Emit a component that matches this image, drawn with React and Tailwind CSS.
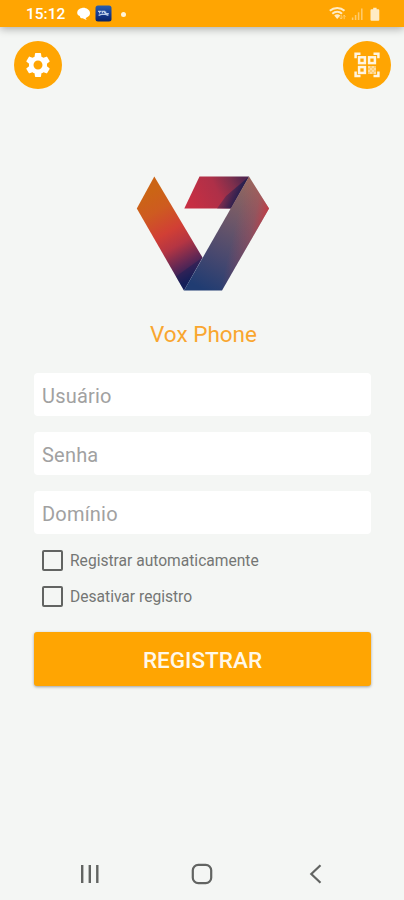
import { useState } from "react";
import { MdSettings } from "react-icons/md";

const FIELDS = [
  { name: "user", label: "Usuário", type: "text" },
  { name: "password", label: "Senha", type: "password" },
  { name: "domain", label: "Domínio", type: "text" },
];

const OPTIONS = [
  { name: "autoRegister", label: "Registrar automaticamente" },
  { name: "disableRegister", label: "Desativar registro" },
];

const StatusBar = () => (
  <header className="relative flex h-[27px] shrink-0 items-center bg-[#ffa502] pl-[26px] pr-[23px] text-white shadow-[0_2px_8px_rgba(0,0,0,0.3)]">
    <span className="w-[51px] pt-[3px] text-[15.5px] font-medium leading-none">
      15:12
    </span>
    <svg viewBox="0 0 14 14" className="mt-[1px] h-[14px] w-[14px]" fill="currentColor">
      <path d="M5 1C8 0.1 12.9 2.4 13 6C13.1 8.8 10.6 10.4 8.6 10.9L9.6 13L5.6 11.2C3.9 11.3 2.9 10.4 2.8 8.9C1 8.4 0.1 7.1 0.2 5.4C0.3 3 2.4 1.5 5 1Z" />
    </svg>
    <svg viewBox="0 0 17 17" className="ml-[4px] h-[17px] w-[17px]">
      <defs>
        <linearGradient id="appIcon" x1="0" y1="0" x2="0" y2="1">
          <stop offset="0" stopColor="#2a5fae" />
          <stop offset="0.5" stopColor="#163d94" />
          <stop offset="1" stopColor="#092264" />
        </linearGradient>
      </defs>
      <rect x="0.5" y="0.5" width="16" height="16" rx="2.5" fill="url(#appIcon)" />
      <path
        d="M3 6.4H6.4M4.6 6.4V8.6M7.4 8.2V6.4H9.5V8.2M10.6 6.4V8.6H13.8M3.6 10.4L6.5 9.3H10.5L13.4 10.4"
        fill="none"
        stroke="#b9cbe6"
        strokeWidth="1.3"
      />
    </svg>
    <span className="ml-[8.5px] mt-[1px] h-[5px] w-[5px] rounded-full bg-[#fff4da]" />
    <svg viewBox="0 0 54 16" className="ml-auto h-[16px] w-[54px]" fill="none">
      <g stroke="#ffebc5" strokeWidth="2">
        <path d="M2.8 4.8C7 1.1 13.5 1.1 17.5 4.8" />
        <path d="M5.3 7.8C8.2 5 12.3 5 15 7.8" />
      </g>
      <path d="M7.2 9.5C9 7.9 11.6 7.9 13.3 9.5L10.2 13Z" fill="#ffebc5" />
      <path d="M14.2 9V13M12.8 11.5L14.2 13L15.6 11.5M17.2 13.2V9.2M15.9 10.6L17.2 9.2L18.5 10.6" stroke="#ffcf78" strokeWidth="0.9" />
      <g stroke="#ffcc70" strokeWidth="1.5">
        <path d="M25.6 11.5V14" />
        <path d="M28.6 9V14" />
        <path d="M31.6 6.3V14" />
        <path d="M34.8 2.5V14" />
      </g>
      <path
        d="M46.2 1.8H49.6V3.2H51.3Q52.3 3.2 52.3 4.2V13.8Q52.3 14.8 51.3 14.8H44.5Q43.5 14.8 43.5 13.8V4.2Q43.5 3.2 44.5 3.2H46.2Z"
        fill="#ffebc5"
      />
    </svg>
  </header>
);

const QrIcon = () => (
  <svg viewBox="0 0 26 26" className="h-[26px] w-[26px]" fill="none" stroke="#fff5e2" strokeWidth="2.5">
    <path d="M1.6 6.3V1.7H6.5M19.5 1.7H24.4V6.3M24.4 19.5V24.1H19.5M6.5 24.1H1.6V19.5" />
    <rect x="5.1" y="5.3" width="5.8" height="5.8" />
    <rect x="15.1" y="5.3" width="5.8" height="5.8" />
    <rect x="5.1" y="15.1" width="5.8" height="5.8" />
    <path
      d="M14 14h2v2h-2zM18 14h2v2h-2zM16 16h2v2h-2zM20 16h2v2h-2zM14 18h2v2h-2zM18 18h2v2h-2zM16 20h2v2h-2zM20 20h2v2h-2z"
      fill="#fff1d6"
      fillOpacity="0.5"
      stroke="none"
    />
    <path d="M14 14h8v8h-8z" fill="#ffeccb" fillOpacity="0.55" stroke="none" />
  </svg>
);

const Logo = () => (
  <svg viewBox="136 175 134 117" className="h-[117px] w-[134px]">
    <defs>
      <linearGradient id="left" gradientUnits="userSpaceOnUse" x1="146" y1="195" x2="192" y2="279">
        <stop offset="0" stopColor="#cb6415" />
        <stop offset="0.2" stopColor="#ce5b20" />
        <stop offset="0.45" stopColor="#d13f35" />
        <stop offset="0.62" stopColor="#b43543" />
        <stop offset="0.82" stopColor="#602754" />
        <stop offset="1" stopColor="#14205a" />
      </linearGradient>
      <linearGradient id="top" gradientUnits="userSpaceOnUse" x1="192" y1="204" x2="243" y2="178">
        <stop offset="0" stopColor="#c62f43" />
        <stop offset="0.5" stopColor="#ae3048" />
        <stop offset="0.8" stopColor="#7c2f4c" />
        <stop offset="1" stopColor="#54264e" />
      </linearGradient>
      <linearGradient id="fold" gradientUnits="userSpaceOnUse" x1="219" y1="198" x2="236" y2="206">
        <stop offset="0" stopColor="#5c2a52" stopOpacity="0.4" />
        <stop offset="0.6" stopColor="#3a2350" stopOpacity="0.85" />
        <stop offset="1" stopColor="#1d1d4e" />
      </linearGradient>
      <linearGradient id="right" gradientUnits="userSpaceOnUse" x1="197" y1="286" x2="253" y2="182">
        <stop offset="0" stopColor="#203c72" />
        <stop offset="0.3" stopColor="#47486f" />
        <stop offset="0.65" stopColor="#705868" />
        <stop offset="1" stopColor="#96685f" />
      </linearGradient>
      <linearGradient id="edge" gradientUnits="userSpaceOnUse" x1="240" y1="204" x2="270" y2="211">
        <stop offset="0" stopColor="#c04350" stopOpacity="0" />
        <stop offset="0.55" stopColor="#c04350" stopOpacity="0.3" />
        <stop offset="1" stopColor="#cf303c" stopOpacity="0.9" />
      </linearGradient>
    </defs>
    <path d="M154.3 176.5L136.8 208.5L184 290.5L202.5 257.5Z" fill="url(#left)" />
    <path d="M202.5 257.5L184 290.5L176 276.5Z" fill="#131e57" fillOpacity="0.4" />
    <path d="M199.5 176.5H249L231 208.5H184.3Z" fill="url(#top)" />
    <path d="M249 176.5L226 196L217 208.5H231Z" fill="url(#fold)" />
    <path d="M249 176.5L269 208.5L222 290.5H184Z" fill="url(#right)" />
    <path d="M249 176.5L269 208.5L222 290.5H184Z" fill="url(#edge)" />
  </svg>
);

const RoundButton = ({ label, children }) => (
  <button
    type="button"
    aria-label={label}
    className="flex h-12 w-12 items-center justify-center rounded-full bg-[#ffa502] text-white"
  >
    {children}
  </button>
);

const NavigationBar = () => (
  <nav className="mt-auto flex h-[53px] items-center justify-between px-[80px] text-[#626462]">
    <svg viewBox="0 0 20 20" className="h-5 w-5" fill="none" stroke="currentColor" strokeWidth="2.4">
      <path d="M2.2 1V19M9.8 1V19M17.3 1V19" />
    </svg>
    <svg viewBox="0 0 22 22" className="mr-[4px] h-[22px] w-[22px]" fill="none" stroke="currentColor" strokeWidth="2.2">
      <rect x="1.8" y="1.8" width="18.4" height="18.4" rx="5.5" />
    </svg>
    <svg viewBox="0 0 16 20" className="h-5 w-4" fill="none" stroke="currentColor" strokeWidth="2.2">
      <path d="M12.5 1.2L3.3 10L12.5 18.8" />
    </svg>
  </nav>
);

const App = () => {
  const [formData, setFormData] = useState({
    user: "",
    password: "",
    domain: "",
    autoRegister: false,
    disableRegister: false,
  });

  const handleChange = (e) => {
    const { name, value, type, checked } = e.target;
    setFormData((prev) => ({
      ...prev,
      [name]: type === "checkbox" ? checked : value,
    }));
  };

  const handleSubmit = (e) => {
    e.preventDefault();
  };

  return (
    <div className="flex h-[900px] w-[404px] flex-col overflow-hidden bg-[#f4f6f4] font-[Roboto,sans-serif]">
      <StatusBar />
      <div className="flex justify-between pl-[14px] pr-[13px] pt-[14px]">
        <RoundButton label="Configurações">
          <MdSettings className="h-[30px] w-[30px]" />
        </RoundButton>
        <RoundButton label="Ler código QR">
          <QrIcon />
        </RoundButton>
      </div>

      <main className="mt-[86px] flex flex-col items-center pl-px">
        <Logo />
        <h1 className="mt-[28px] pl-[2px] text-[22.5px] font-normal leading-[28px] text-[#f9a62f]">
          Vox Phone
        </h1>

        <form onSubmit={handleSubmit} className="mt-[25px] w-full px-[33px]">
          <div className="flex flex-col gap-4">
            {FIELDS.map((field) => (
              <input
                key={field.name}
                type={field.type}
                name={field.name}
                value={formData[field.name]}
                onChange={handleChange}
                placeholder={field.label}
                className="h-[43px] w-full rounded-[4px] bg-white px-2 pt-[2px] text-[20px] tracking-[0.2px] text-gray-700 outline-none placeholder:text-[#a1a1a1]"
              />
            ))}
          </div>

          <div className="mt-[16px] flex flex-col gap-[15px] pl-2">
            {OPTIONS.map((option) => (
              <label key={option.name} className="flex h-[21px] items-center">
                <input
                  type="checkbox"
                  name={option.name}
                  checked={formData[option.name]}
                  onChange={handleChange}
                  className="h-[21px] w-[21px] appearance-none rounded-[2px] border-2 border-[#626462] checked:bg-[#ffa502]"
                />
                <span className="ml-[7px] pt-[3px] text-[15.6px] leading-none text-[#747674]">
                  {option.label}
                </span>
              </label>
            ))}
          </div>

          <button
            type="submit"
            className="mt-[25px] h-[54px] w-full rounded-[3px] bg-[#ffa502] pt-[3px] text-[22.5px] font-medium text-[#fff8e9] shadow-[0_1px_3px_rgba(0,0,0,0.35)]"
          >
            REGISTRAR
          </button>
        </form>
      </main>

      <NavigationBar />
    </div>
  );
};

export default App;
